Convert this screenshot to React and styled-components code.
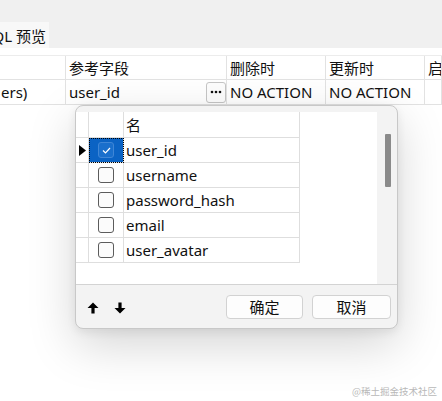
import React from 'react';
import styled, {createGlobalStyle} from 'styled-components';

const GlobalStyle = createGlobalStyle`
    * { box-sizing: border-box; }
    body {
        margin: 0;
        background: #ffffff;
        font-family: "Noto Sans", "Noto Sans CJK SC", sans-serif;
        color: #111;
    }
`;

const Page = styled.div`
    width: 442px;
    height: 401px;
    position: relative;
    overflow: hidden;
    background: #fff;
`;

const TabBar = styled.div`
    height: 48px;
    background: #f0f0f0;
    display: flex;
    align-items: flex-end;
`;

const Tab = styled.div`
    width: 49px;
    height: 26px;
    background: #f8f8f8;
    display: flex;
    align-items: center;
    justify-content: flex-end;
    padding-right: 3px;
    font-size: 15px;
    white-space: nowrap;
    overflow: hidden;
`;

const Table = styled.div`
    padding-top: 7px;
`;

const Row = styled.div`
    display: grid;
    grid-template-columns: 66px 161px 99px 99px 1fr;
    height: 25px;
    border-top: ${p => p.$first ? '1px solid #ececec' : 'none'};
    border-bottom: 1px solid #e2e2e2;
`;

const Cell = styled.div`
    border-right: 1px solid #e2e2e2;
    display: flex;
    align-items: center;
    justify-content: space-between;
    padding-left: ${p => p.$pad ?? 3}px;
    font-size: 15px;
    white-space: nowrap;
    overflow: hidden;
`;

const MoreButton = styled.div`
    width: 20px;
    height: 21px;
    border: 1px solid #c6c6c6;
    border-radius: 3px;
    background: #fdfdfd;
    display: flex;
    align-items: center;
    justify-content: center;
`;

const Popup = styled.div`
    position: absolute;
    left: 75px;
    top: 105px;
    width: 323px;
    height: 224px;
    background: #f3f3f3;
    border: 1px solid #c8c8c8;
    border-radius: 8px;
    overflow: hidden;
    display: flex;
    flex-direction: column;
    box-shadow: 0 16px 48px rgba(0, 0, 0, 0.17), 0 3px 10px rgba(0, 0, 0, 0.07);
`;

const PopupBody = styled.div`
    display: flex;
    height: 178px;
`;

const GridArea = styled.div`
    width: 301px;
    margin-top: 6px;
    background: #fff;
`;

const GridRow = styled.div`
    display: grid;
    grid-template-columns: 13px 35px 176px;
    height: ${p => p.$head ? 26 : 25}px;
`;

const GridCell = styled.div`
    border-right: 1px solid #dedede;
    border-bottom: 1px solid #dedede;
    display: flex;
    align-items: center;
    justify-content: ${p => p.$center ? 'center' : 'flex-start'};
    padding-left: ${p => p.$center ? 0 : 2}px;
    font-size: 15px;
    white-space: nowrap;
    background: ${p => p.$selected ? '#0b63c4' : 'transparent'};
    outline: ${p => p.$selected ? '1px dotted #000' : 'none'};
    outline-offset: -1px;
`;

const Checkbox = styled.div`
    width: 16px;
    height: 16px;
    border-radius: 3px;
    border: 1px solid ${p => p.$checked ? '#3f86d6' : '#5c5c5c'};
    background: ${p => p.$checked ? '#1a6fcc' : '#fbfbfb'};
    display: flex;
    align-items: center;
    justify-content: center;
`;

const ScrollTrack = styled.div`
    flex: 1;
    padding-top: 28px;
    padding-left: 8px;
`;

const Thumb = styled.div`
    width: 6px;
    height: 53px;
    background: #8a8a8a;
    border-radius: 1px;
`;

const Footer = styled.div`
    flex: 1;
    border-top: 1px solid #d3d3d3;
    display: flex;
    align-items: center;
    padding: 0 6px 0 11px;
`;

const Arrows = styled.div`
    display: flex;
    gap: 15px;
    flex: 1;
    padding-top: 2px;
`;

const Buttons = styled.div`
    display: flex;
    gap: 9px;
`;

const Button = styled.div`
    width: ${p => p.$w}px;
    height: 24px;
    border: 1px solid #d2d2d2;
    border-radius: 4px;
    background: #fdfdfd;
    font-size: 15px;
    display: flex;
    align-items: center;
    justify-content: center;
`;

const Watermark = styled.div`
    position: absolute;
    right: 5px;
    bottom: 3px;
    font-size: 9.5px;
    color: #b8b8b8;
    font-family: "Noto Sans CJK SC", sans-serif;
`;

const Arrow = ({down}) => (
    <svg width="12" height="12" viewBox="0 0 12 12" style={down ? {transform: 'rotate(180deg)'} : null}>
        <path d="M6 0.5 L11.5 6 L7.6 6 L7.6 11.5 L4.4 11.5 L4.4 6 L0.5 6 Z" fill="#000"/>
    </svg>
);

const Dots = () => (
    <svg width="12" height="4" viewBox="0 0 12 4">
        <circle cx="2" cy="2" r="1.3" fill="#111"/>
        <circle cx="6" cy="2" r="1.3" fill="#111"/>
        <circle cx="10" cy="2" r="1.3" fill="#111"/>
    </svg>
);

const fields = ['user_id', 'username', 'password_hash', 'email', 'user_avatar'];

export default function App(){
    return (
        <Page>
            <GlobalStyle/>
            <TabBar>
                <Tab>QL 预览</Tab>
            </TabBar>
            <Table>
                <Row $first>
                    <Cell/>
                    <Cell>参考字段</Cell>
                    <Cell>删除时</Cell>
                    <Cell>更新时</Cell>
                    <Cell>启</Cell>
                </Row>
                <Row>
                    <Cell $pad={1}>ers)</Cell>
                    <Cell>user_id<MoreButton><Dots/></MoreButton></Cell>
                    <Cell>NO ACTION</Cell>
                    <Cell>NO ACTION</Cell>
                    <Cell/>
                </Row>
            </Table>

            <Popup>
                <PopupBody>
                    <GridArea>
                        <GridRow $head>
                            <GridCell/>
                            <GridCell/>
                            <GridCell>名</GridCell>
                        </GridRow>
                        {fields.map((f, i) => (
                            <GridRow key={f}>
                                <GridCell $center>
                                    {i === 0 ? (
                                        <svg width="7" height="11" viewBox="0 0 7 11"><path d="M0 0 L7 5.5 L0 11 Z" fill="#000"/></svg>
                                    ) : null}
                                </GridCell>
                                <GridCell $center $selected={i === 0}>
                                    <Checkbox $checked={i === 0}>
                                        {i === 0 ? (
                                            <svg width="9" height="7" viewBox="0 0 9 7"><path d="M1 3.5 L3.5 6 L8 1" fill="none" stroke="#fff" strokeWidth="1.2"/></svg>
                                        ) : null}
                                    </Checkbox>
                                </GridCell>
                                <GridCell>{f}</GridCell>
                            </GridRow>
                        ))}
                    </GridArea>
                    <ScrollTrack><Thumb/></ScrollTrack>
                </PopupBody>
                <Footer>
                    <Arrows>
                        <Arrow/>
                        <Arrow down/>
                    </Arrows>
                    <Buttons>
                        <Button $w={77}>确定</Button>
                        <Button $w={79}>取消</Button>
                    </Buttons>
                </Footer>
            </Popup>
            <Watermark>@稀土掘金技术社区</Watermark>
        </Page>
    );
}
